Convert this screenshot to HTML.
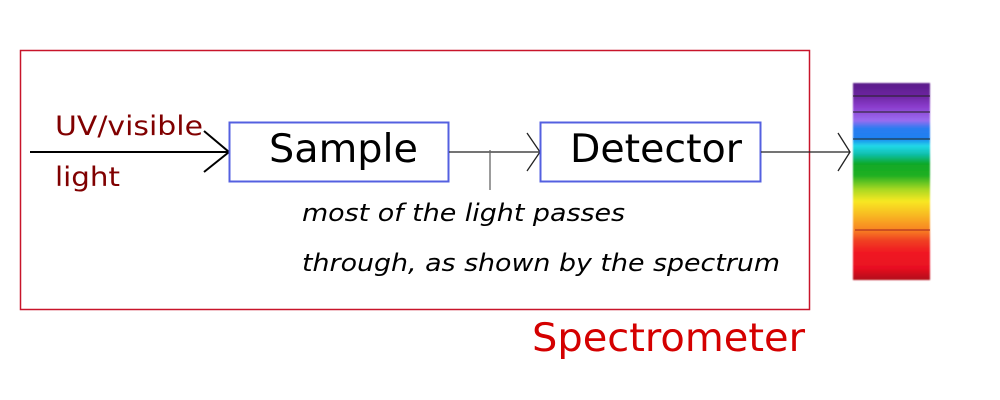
<!DOCTYPE html>
<html><head><meta charset="utf-8"><style>
html,body{margin:0;padding:0;background:#fff;width:1000px;height:400px;overflow:hidden}
svg text{font-family:"DejaVu Sans","Liberation Sans",sans-serif}
</style></head><body>
<svg width="1000" height="400" viewBox="0 0 1000 400" xmlns="http://www.w3.org/2000/svg">
<defs>
<linearGradient id="sp" x1="0" y1="0" x2="0" y2="1">
<stop offset="0" stop-color="#5a1a8a"/>
<stop offset="0.06" stop-color="#6a249e"/>
<stop offset="0.12" stop-color="#8a3ccc"/>
<stop offset="0.19" stop-color="#9a6cf0"/>
<stop offset="0.23" stop-color="#2a7cf0"/>
<stop offset="0.28" stop-color="#1e80f0"/>
<stop offset="0.32" stop-color="#20d8e8"/>
<stop offset="0.36" stop-color="#10c0b0"/>
<stop offset="0.41" stop-color="#10a828"/>
<stop offset="0.47" stop-color="#20b020"/>
<stop offset="0.54" stop-color="#a8d820"/>
<stop offset="0.60" stop-color="#f8e820"/>
<stop offset="0.66" stop-color="#f8c020"/>
<stop offset="0.74" stop-color="#f88820"/>
<stop offset="0.80" stop-color="#f04020"/>
<stop offset="0.86" stop-color="#f01820"/>
<stop offset="0.94" stop-color="#e81020"/>
<stop offset="1" stop-color="#b00818"/>
</linearGradient>
<filter id="bl"><feGaussianBlur stdDeviation="0.8"/></filter>
</defs>
<rect x="20.5" y="50.5" width="789" height="259" fill="none" stroke="#c8142a" stroke-width="1.5"/>
<text x="55" y="135" font-size="27" fill="#800000" textLength="148" lengthAdjust="spacingAndGlyphs">UV/visible</text>
<text x="55" y="186" font-size="27" fill="#800000" textLength="65" lengthAdjust="spacingAndGlyphs">light</text>
<line x1="30" y1="152" x2="229" y2="152" stroke="#000" stroke-width="2"/>
<polyline points="204,131 229,152 204,172" fill="none" stroke="#000" stroke-width="2"/>
<rect x="229.5" y="122.5" width="219" height="59" fill="#fff" stroke="#5460e0" stroke-width="2"/>
<text x="269" y="162" font-size="39" fill="#000" textLength="149" lengthAdjust="spacingAndGlyphs">Sample</text>
<line x1="449" y1="152" x2="540" y2="152" stroke="#222" stroke-width="1.3"/>
<polyline points="527,133 540,152 527,171" fill="none" stroke="#222" stroke-width="1.3"/>
<line x1="490" y1="150" x2="490" y2="190" stroke="#666" stroke-width="1.3"/>
<rect x="540.5" y="122.5" width="220" height="59" fill="#fff" stroke="#5460e0" stroke-width="2"/>
<text x="570" y="162" font-size="39" fill="#000" textLength="172" lengthAdjust="spacingAndGlyphs">Detector</text>
<line x1="761" y1="152" x2="850" y2="152" stroke="#222" stroke-width="1.3"/>
<polyline points="838,133 850,152 838,171" fill="none" stroke="#222" stroke-width="1.3"/>
<text x="302" y="221" font-size="24" font-style="italic" fill="#000" textLength="323" lengthAdjust="spacingAndGlyphs">most of the light passes</text>
<text x="302" y="271" font-size="24" font-style="italic" fill="#000" textLength="478" lengthAdjust="spacingAndGlyphs">through, as shown by the spectrum</text>
<text x="532" y="351" font-size="39" fill="#d40000" textLength="273" lengthAdjust="spacingAndGlyphs">Spectrometer</text>
<g filter="url(#bl)">
<rect x="853" y="83" width="77" height="197" fill="url(#sp)"/>
</g>
<line x1="853" y1="96" x2="930" y2="96" stroke="#222" stroke-width="1"/>
<line x1="853" y1="112" x2="930" y2="112" stroke="#222" stroke-width="1"/>
<line x1="853" y1="139" x2="930" y2="139" stroke="#222" stroke-width="1"/>
<line x1="855" y1="230" x2="930" y2="230" stroke="#a02020" stroke-width="1"/>
</svg>
</body></html>
